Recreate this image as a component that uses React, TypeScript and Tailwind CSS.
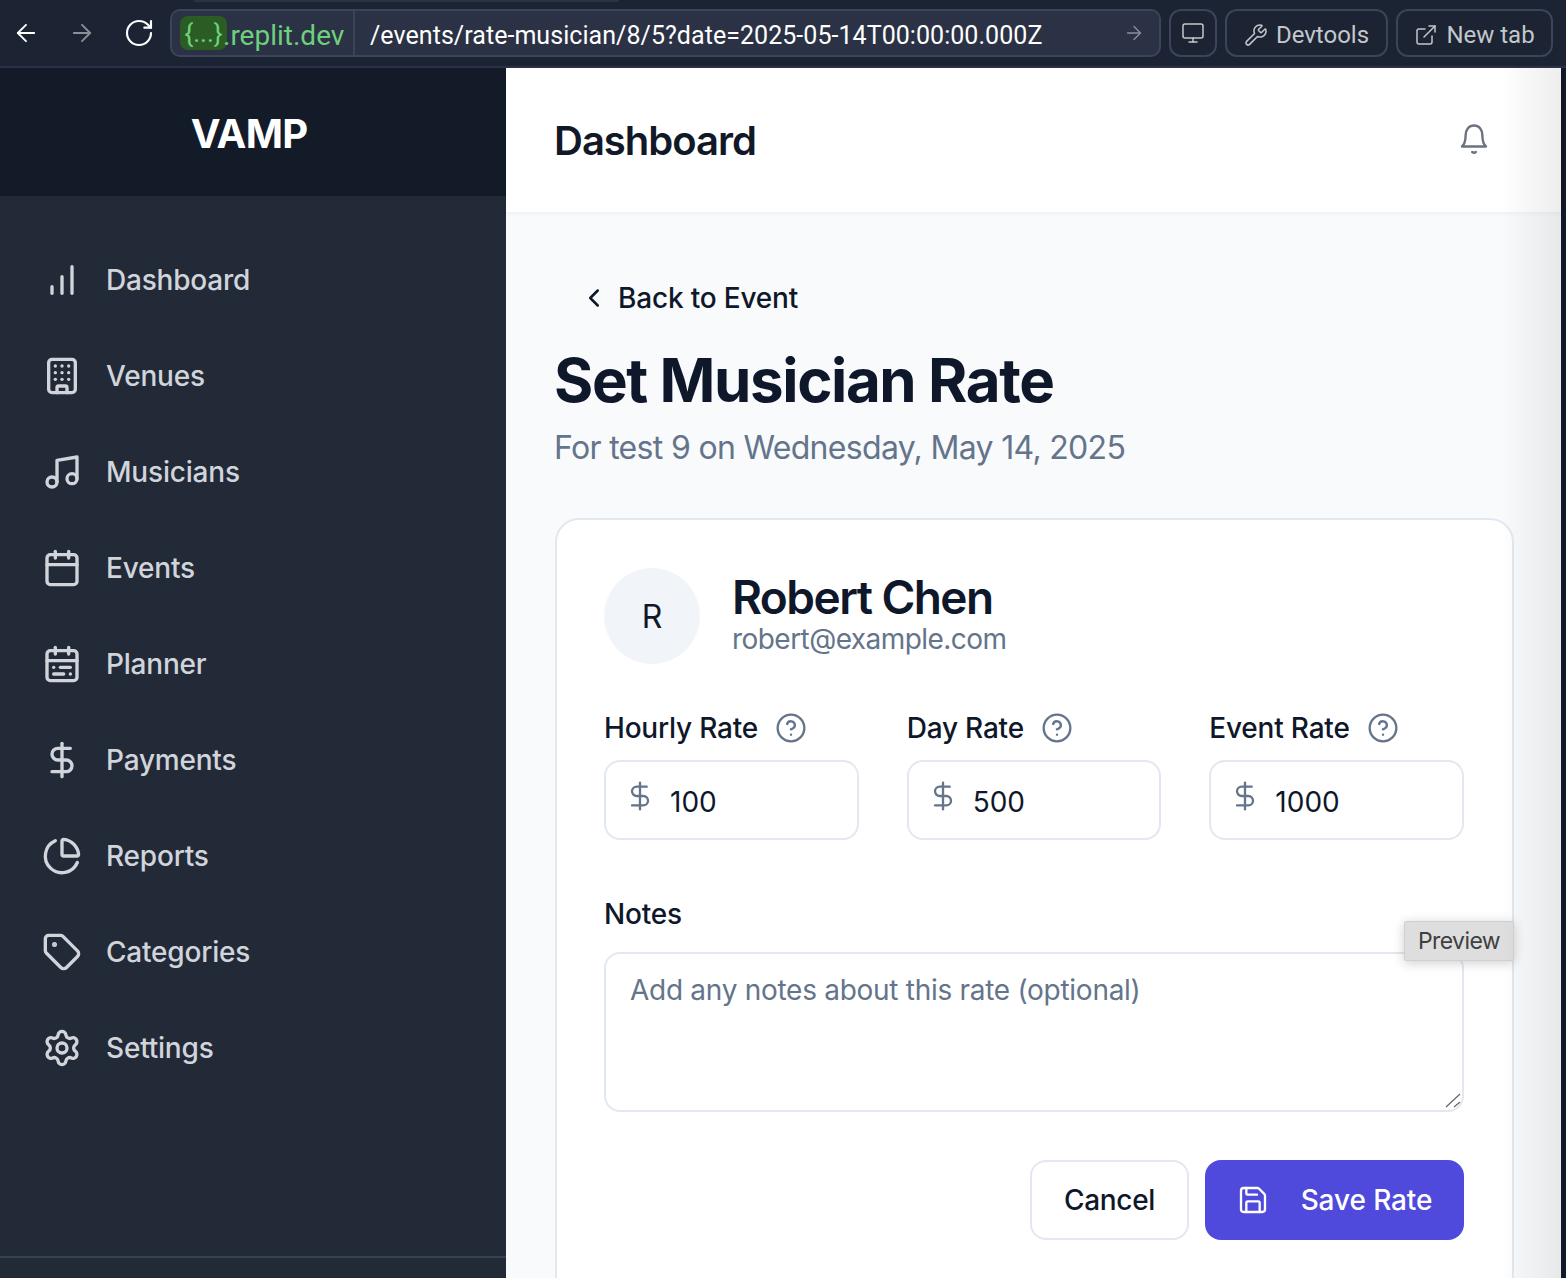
import React from 'react'
import {
  ArrowLeft,
  ArrowRight,
  Building,
  Calendar,
  CalendarRange,
  ChartPie,
  ChevronLeft,
  CircleHelp,
  DollarSign,
  ExternalLink,
  Monitor,
  Music,
  RotateCw,
  Save,
  Settings,
  Tag,
  Wrench,
} from 'lucide-react'

function BarsIcon({ size, strokeWidth }: { size: number; strokeWidth: number }) {
  return (
    <svg width={size} height={size} viewBox="0 0 24 24" fill="none" stroke="currentColor" strokeWidth={strokeWidth} strokeLinecap="round" strokeLinejoin="round">
      <path d="M12 20V10" />
      <path d="M18 20V4" />
      <path d="M6 20v-4" />
    </svg>
  )
}

function BellIcon() {
  return (
    <svg width="36" height="36" viewBox="0 0 36 36" fill="none" stroke="#6b7280" strokeWidth="2.4" strokeLinecap="round" strokeLinejoin="round" className="shrink-0">
      <path d="M6 24.5c2.6-2.4 3.6-5.5 3.6-11C9.600 7.500 13 3.500 18 3.500s8.400 4 8.400 10c0 5.500 1 8.600 3.600 11z" />
      <path d="M16.200 30c1.200.9 2.400.9 3.600 0" />
    </svg>
  )
}

const navItems = [
  { label: 'Dashboard', icon: BarsIcon },
  { label: 'Venues', icon: Building },
  { label: 'Musicians', icon: Music },
  { label: 'Events', icon: Calendar },
  { label: 'Planner', icon: CalendarRange },
  { label: 'Payments', icon: DollarSign },
  { label: 'Reports', icon: ChartPie },
  { label: 'Categories', icon: Tag },
  { label: 'Settings', icon: Settings },
]

const rates = [
  { label: 'Hourly Rate', value: '100' },
  { label: 'Day Rate', value: '500' },
  { label: 'Event Rate', value: '1000' },
]

function BrowserBar() {
  return (
    <div className="relative h-[68px] shrink-0 flex items-center bg-[#1c2333] border-b-2 border-[#2b3245] font-['Roboto',sans-serif] text-[24px]">
      <div className="absolute left-[194px] top-0 w-[425px] h-[2px] bg-[#2b3245]" />
      <div className="w-[170px] shrink-0 flex items-center pl-[12px] gap-[28px] text-white">
        <ArrowLeft size={28} strokeWidth={1.6} />
        <ArrowRight size={28} strokeWidth={1.6} className="text-[#8a8f98]" />
        <RotateCw size={32} strokeWidth={1.6} className="-ml-[1px]" />
      </div>
      <div className="w-[991px] h-[48px] flex items-center bg-[#2b3245] border-2 border-[#3c445c] rounded-[10px]">
        <div className="h-full w-[183px] shrink-0 flex items-center pl-[8px] pt-[2px] border-r-2 border-[#3c445c] text-[#6fd07c] text-[28px]">
          <span className="h-[34px] w-[47px] -mt-[2px] flex items-center justify-center rounded-[8px] bg-[#2b5c24] text-[26px]">{'{...}'}</span>
          <span className="-ml-[4px] pt-[3px]">.replit.dev</span>
        </div>
        <span className="pl-[15px] pt-[5px] flex-1 text-white text-[25px] tracking-[0.05px] whitespace-nowrap">/events/rate-musician/8/5?date=2025-05-14T00:00:00.000Z</span>
        <ArrowRight size={22} strokeWidth={1.5} className="mr-[14px] text-[#8a8f98]" />
      </div>
      <div className="ml-[8px] w-[48px] h-[48px] flex items-center justify-center border-2 border-[#3c445c] rounded-[12px] text-[#c2c8cc]">
        <Monitor size={24} strokeWidth={1.5} />
      </div>
      <div className="ml-[8px] w-[163px] h-[48px] flex items-center justify-center gap-[8px] pt-[3px] border-2 border-[#3c445c] rounded-[12px] text-[#c2c8cc]">
        <Wrench size={24} strokeWidth={1.5} />
        <span>Devtools</span>
      </div>
      <div className="ml-[8px] w-[157px] h-[48px] flex items-center justify-center gap-[8px] pt-[3px] border-2 border-[#3c445c] rounded-[12px] text-[#c2c8cc]">
        <ExternalLink size={24} strokeWidth={1.5} />
        <span>New tab</span>
      </div>
    </div>
  )
}

function Sidebar() {
  return (
    <div className="w-[506px] shrink-0 flex flex-col bg-[#222a38]">
      <div className="h-[128px] shrink-0 flex items-center justify-center pr-[8px] pt-[3px] bg-[#131a28] text-white text-[40px] font-bold tracking-[-0.75px]">
        VAMP
      </div>
      <nav className="flex-1 pt-[36px]">
        {navItems.map((item) => (
          <div key={item.label} className="h-[96px] flex items-center pl-[42px] gap-[24px] text-[#d1d5db] text-[28px] font-medium tracking-[-0.2px]">
            <item.icon size={40} strokeWidth={2} />
            <span>{item.label}</span>
          </div>
        ))}
      </nav>
      <div className="h-[22px] shrink-0 border-t-2 border-[#374151]" />
    </div>
  )
}

function RateField({ label, value }: { label: string; value: string }) {
  return (
    <div>
      <div className="h-[40px] flex items-center gap-[17px] text-[#0f172a] text-[28px] font-medium tracking-[-0.2px]">
        <span>{label}</span>
        <CircleHelp size={32} strokeWidth={1.75} className="text-[#64748b]" />
      </div>
      <div className="relative mt-[12px]">
        <DollarSign size={32} strokeWidth={1.75} className="absolute left-[20px] top-[20px] text-[#64748b]" />
        <input
          defaultValue={value}
          className="w-full h-[80px] pl-[64px] pr-[24px] pt-[3px] bg-white border-2 border-[#e2e8f0] rounded-[16px] text-[#0f172a] text-[28px]"
        />
      </div>
    </div>
  )
}

export default function App() {
  return (
    <div className="w-[1566px] h-[1278px] overflow-hidden flex flex-col bg-[#111827] font-['Inter',sans-serif]">
      <BrowserBar />
      <div className="flex-1 min-h-0 flex">
        <Sidebar />
        <div className="relative flex-1 min-w-0 flex flex-col bg-[#f8fafc]">
          <header className="h-[144px] shrink-0 flex items-center justify-between pl-[48px] pr-[69px] bg-white shadow-[0_2px_4px_rgba(0,0,0,0.04)]">
            <h1 className="pt-[2px] text-[#111827] text-[40px] font-semibold tracking-[-1px]">Dashboard</h1>
            <BellIcon />
          </header>
          <main className="pl-[48px] pr-[47px] pt-[66px]">
            <div className="h-[40px] flex items-center pl-[25px] gap-[9px] text-[#0f172a] text-[28px] font-medium tracking-[-0.18px]">
              <ChevronLeft size={30} strokeWidth={2} />
              <span>Back to Event</span>
            </div>
            <h2 className="mt-[26px] text-[#0f172a] text-[60px] leading-[72px] font-bold tracking-[-1.4px]">Set Musician Rate</h2>
            <p className="mt-[10px] text-[#64748b] text-[32px] leading-[44px] tracking-[-0.68px]">For test 9 on Wednesday, May 14, 2025</p>
            <div className="relative ml-[1px] mt-[48px] h-[900px] pl-[47px] pr-[48px] pt-[48px] pb-[47px] bg-white border-2 border-[#e2e8f0] rounded-[24px]">
              <div className="flex items-center gap-[32px]">
                <div className="w-[96px] h-[96px] pt-[2px] flex items-center justify-center rounded-full bg-[#f1f5f9] text-[#0f172a] text-[32px] shrink-0">R</div>
                <div>
                  <div className="-mt-[10px] text-[#0f172a] text-[46px] leading-[56px] font-semibold tracking-[-1.55px]">Robert Chen</div>
                  <div className="text-[#64748b] text-[28px] leading-[28px] tracking-[-0.55px]">robert@example.com</div>
                </div>
              </div>
              <div className="mt-[44px] grid grid-cols-3 gap-[48px]">
                {rates.map((rate) => (
                  <RateField key={rate.label} label={rate.label} value={rate.value} />
                ))}
              </div>
              <div className="mt-[54px] h-[40px] flex items-center text-[#0f172a] text-[28px] font-medium tracking-[-0.2px]">Notes</div>
              <div className="relative mt-[18px] h-[160px]">
                <textarea
                  placeholder="Add any notes about this rate (optional)"
                  className="block w-full h-full px-[24px] py-[15px] bg-white border-2 border-[#e2e8f0] rounded-[16px] text-[28px] tracking-[-0.28px] resize-none placeholder:text-[#64748b]"
                />
                <svg width="16" height="16" viewBox="0 0 16 16" stroke="#666666" strokeWidth="1.2" className="absolute right-[3px] bottom-[4px]">
                  <path d="M1 15 15 2" />
                  <path d="M9 15 15 10" />
                </svg>
              </div>
              <div className="mt-[48px] flex justify-end gap-[16px]">
                <button className="w-[159px] h-[80px] bg-white border-2 border-[#e2e8f0] rounded-[16px] text-[#0f172a] text-[28px] font-medium tracking-[-0.3px]">
                  Cancel
                </button>
                <button className="w-[259px] h-[80px] flex items-center justify-center gap-[32px] bg-[#4f49dc] rounded-[16px] text-white text-[28px] font-medium tracking-[-0.1px]">
                  <Save size={32} strokeWidth={1.75} />
                  <span>Save Rate</span>
                </button>
              </div>
              <div className="absolute right-[-2px] top-[401px] w-[110px] h-[40px] flex items-center justify-center bg-[#dedede] border border-[#d0d0d0] rounded-[2px] shadow-[0_2px_12px_rgba(0,0,0,0.2)] text-[#404040] text-[23px] tracking-[-0.6px]">
                Preview
              </div>
            </div>
          </main>
          <div className="absolute right-0 top-0 bottom-0 w-[60px] pointer-events-none bg-gradient-to-r from-transparent to-black/[0.07]" />
        </div>
        <div className="w-[5px] shrink-0 bg-[#111827]" />
      </div>
    </div>
  )
}
